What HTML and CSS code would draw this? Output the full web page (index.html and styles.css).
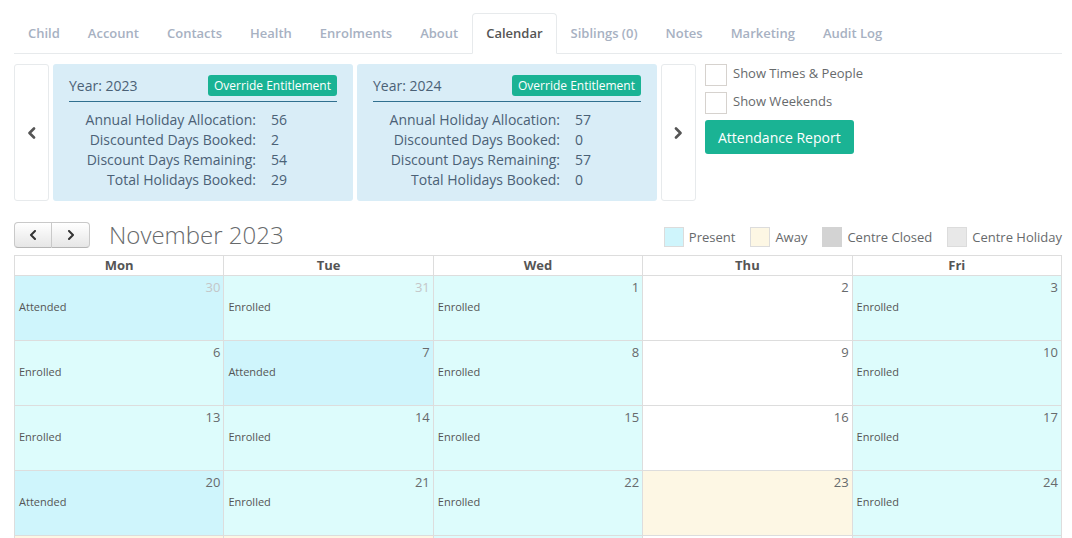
FILE: index.html
```html
<!DOCTYPE html>
<html lang="en">
<head>
<meta charset="utf-8">
<title>Calendar</title>
<link rel="stylesheet" href="styles.css">
</head>
<body>
<div class="page">
  <ul class="tabs">
    <li class="tab">Child</li>
    <li class="tab">Account</li>
    <li class="tab">Contacts</li>
    <li class="tab">Health</li>
    <li class="tab">Enrolments</li>
    <li class="tab">About</li>
    <li class="tab active">Calendar</li>
    <li class="tab">Siblings (0)</li>
    <li class="tab">Notes</li>
    <li class="tab">Marketing</li>
    <li class="tab">Audit Log</li>
  </ul>

  <div class="year-row">
    <button class="arrow-box" type="button" aria-label="Previous year">
      <svg width="9" height="12" viewBox="0 0 9 12"><polyline points="7,1.5 2.5,6 7,10.5" fill="none" stroke="#555" stroke-width="2.6" stroke-linecap="round" stroke-linejoin="round"/></svg>
    </button>

    <div class="year-card">
      <div class="year-head">
        <span>Year: 2023</span>
        <span class="btn-override">Override Entitlement</span>
      </div>
      <dl class="stats">
        <dt>Annual Holiday Allocation:</dt><dd>56</dd>
        <dt>Discounted Days Booked:</dt><dd>2</dd>
        <dt>Discount Days Remaining:</dt><dd>54</dd>
        <dt>Total Holidays Booked:</dt><dd>29</dd>
      </dl>
    </div>

    <div class="year-card">
      <div class="year-head">
        <span>Year: 2024</span>
        <span class="btn-override">Override Entitlement</span>
      </div>
      <dl class="stats">
        <dt>Annual Holiday Allocation:</dt><dd>57</dd>
        <dt>Discounted Days Booked:</dt><dd>0</dd>
        <dt>Discount Days Remaining:</dt><dd>57</dd>
        <dt>Total Holidays Booked:</dt><dd>0</dd>
      </dl>
    </div>

    <button class="arrow-box" type="button" aria-label="Next year">
      <svg width="9" height="12" viewBox="0 0 9 12"><polyline points="2,1.5 6.5,6 2,10.5" fill="none" stroke="#555" stroke-width="2.6" stroke-linecap="round" stroke-linejoin="round"/></svg>
    </button>

    <div class="controls">
      <label class="check"><span class="box"></span><span class="check-text">Show Times &amp; People</span></label>
      <label class="check"><span class="box"></span><span class="check-text">Show Weekends</span></label>
      <button class="btn-report" type="button">Attendance Report</button>
    </div>
  </div>

  <div class="cal-toolbar">
    <div class="nav-group">
      <button class="nav-btn first" type="button" aria-label="Previous month">
        <svg width="8" height="10" viewBox="0 0 8 10"><polyline points="6,1 2,5 6,9" fill="none" stroke="#333" stroke-width="2" stroke-linecap="round" stroke-linejoin="round"/></svg>
      </button>
      <button class="nav-btn last" type="button" aria-label="Next month">
        <svg width="8" height="10" viewBox="0 0 8 10"><polyline points="2,1 6,5 2,9" fill="none" stroke="#333" stroke-width="2" stroke-linecap="round" stroke-linejoin="round"/></svg>
      </button>
    </div>
    <h2 class="cal-title">November 2023</h2>
    <div class="legend">
      <div class="legend-item"><span class="swatch present"></span>Present</div>
      <div class="legend-item"><span class="swatch away"></span>Away</div>
      <div class="legend-item"><span class="swatch closed"></span>Centre Closed</div>
      <div class="legend-item"><span class="swatch holiday"></span>Centre Holiday</div>
    </div>
  </div>

  <div class="cal">
    <div class="cal-row cal-head">
      <div>Mon</div><div>Tue</div><div>Wed</div><div>Thu</div><div>Fri</div>
    </div>
    <div class="cal-row">
      <div class="day attended"><div class="num other">30</div><div class="status">Attended</div></div>
      <div class="day enrolled"><div class="num other">31</div><div class="status">Enrolled</div></div>
      <div class="day enrolled"><div class="num">1</div><div class="status">Enrolled</div></div>
      <div class="day"><div class="num">2</div></div>
      <div class="day enrolled"><div class="num">3</div><div class="status">Enrolled</div></div>
    </div>
    <div class="cal-row">
      <div class="day enrolled"><div class="num">6</div><div class="status">Enrolled</div></div>
      <div class="day attended"><div class="num">7</div><div class="status">Attended</div></div>
      <div class="day enrolled"><div class="num">8</div><div class="status">Enrolled</div></div>
      <div class="day"><div class="num">9</div></div>
      <div class="day enrolled"><div class="num">10</div><div class="status">Enrolled</div></div>
    </div>
    <div class="cal-row">
      <div class="day enrolled"><div class="num">13</div><div class="status">Enrolled</div></div>
      <div class="day enrolled"><div class="num">14</div><div class="status">Enrolled</div></div>
      <div class="day enrolled"><div class="num">15</div><div class="status">Enrolled</div></div>
      <div class="day"><div class="num">16</div></div>
      <div class="day enrolled"><div class="num">17</div><div class="status">Enrolled</div></div>
    </div>
    <div class="cal-row">
      <div class="day attended"><div class="num">20</div><div class="status">Attended</div></div>
      <div class="day enrolled"><div class="num">21</div><div class="status">Enrolled</div></div>
      <div class="day enrolled"><div class="num">22</div><div class="status">Enrolled</div></div>
      <div class="day away"><div class="num">23</div></div>
      <div class="day enrolled"><div class="num">24</div><div class="status">Enrolled</div></div>
    </div>
    <div class="cal-row">
      <div class="day away"><div class="num">27</div></div>
      <div class="day away"><div class="num">28</div></div>
      <div class="day enrolled"><div class="num">29</div><div class="status">Enrolled</div></div>
      <div class="day"><div class="num">30</div></div>
      <div class="day enrolled"><div class="num other">1</div><div class="status">Enrolled</div></div>
    </div>
  </div>
</div>
</body>
</html>
```

FILE: styles.css
```css
html, body {
  margin: 0;
  overflow: hidden;
}

body {
  font-family: "Open Sans", "DejaVu Sans", sans-serif;
  font-size: 13px;
  color: #676a6c;
  background: #fff;
}

.page {
  padding: 13px 10px 0 14px;
}

/* Tabs */
.tabs {
  display: flex;
  list-style: none;
  margin: 0;
  padding: 0;
  border-bottom: 1px solid #e7eaec;
}

.tab {
  padding: 0 13px;
  line-height: 39px;
  border: 1px solid transparent;
  border-radius: 4px 4px 0 0;
  margin-bottom: -1px;
  font-weight: 600;
  color: #a7b1c2;
  white-space: nowrap;
}

.tab.active {
  color: #555;
  background: #fff;
  border-color: #e7eaec;
  border-bottom-color: #fff;
}

/* Year panels */
.year-row {
  display: flex;
  gap: 4px;
  margin-top: 10px;
  height: 137px;
}

.arrow-box {
  width: 35px;
  flex: none;
  padding: 0;
  border: 1px solid #e7eaec;
  border-radius: 3px;
  background: #fff;
  display: flex;
  align-items: center;
  justify-content: center;
}

.year-card {
  width: 300px;
  flex: none;
  box-sizing: border-box;
  background: #d9edf7;
  border-radius: 3px;
  padding: 11px 16px;
  color: #4b6176;
}

.year-head {
  display: flex;
  justify-content: space-between;
  align-items: center;
  padding-bottom: 5px;
  border-bottom: 1px solid #31708f;
  font-size: 14px;
  line-height: 21px;
}

.btn-override {
  background: #1ab394;
  color: #fff;
  font-size: 12px;
  line-height: 21px;
  padding: 0 6px;
  border-radius: 3px;
}

.stats {
  display: grid;
  grid-template-columns: 187px auto;
  column-gap: 15px;
  margin: 8px 0 0;
  font-size: 14px;
  line-height: 20px;
}

.stats dt {
  text-align: right;
  white-space: nowrap;
}

.stats dd {
  margin: 0;
}

/* Controls */
.controls {
  margin-left: 5px;
  display: flex;
  flex-direction: column;
  align-items: flex-start;
}

.check {
  display: flex;
  align-items: flex-start;
  gap: 6px;
  height: 22px;
  margin-bottom: 6px;
  font-size: 13px;
  color: #676a6c;
}

.check-text {
  line-height: 19px;
}

.box {
  width: 20px;
  height: 20px;
  border: 1px solid #d6d2ce;
  background: #fff;
}

.btn-report {
  background: #1ab394;
  color: #fff;
  border: none;
  border-radius: 3px;
  font-family: "Open Sans", "DejaVu Sans", sans-serif;
  font-size: 14px;
  height: 34px;
  padding: 0 13px;
}

/* Calendar toolbar */
.cal-toolbar {
  display: flex;
  align-items: center;
  height: 26px;
  margin-top: 21px;
  margin-bottom: 7px;
}

.nav-group {
  display: flex;
}

.nav-btn {
  width: 38px;
  height: 26px;
  padding: 0;
  border: 1px solid #c9c9c9;
  border-bottom-color: #b5b5b5;
  background: linear-gradient(#ffffff, #e6e6e6);
  display: flex;
  align-items: center;
  justify-content: center;
}

.nav-btn.first {
  border-radius: 4px 0 0 4px;
}

.nav-btn.last {
  border-left: none;
  border-radius: 0 4px 4px 0;
}

.cal-title {
  margin: 0 0 0 19px;
  font-size: 24px;
  font-weight: 300;
  line-height: 26px;
  color: #676a6c;
}

.legend {
  margin-left: auto;
  display: flex;
  align-items: center;
  padding-top: 4px;
}

.legend-item {
  display: flex;
  align-items: center;
  gap: 5px;
  margin-left: 15px;
  font-size: 13px;
}

.swatch {
  width: 18px;
  height: 18px;
  border: 1px solid #dcdcdc;
}

.swatch.present { background: #cff5fc; }
.swatch.away { background: #fdf7e4; }
.swatch.closed { background: #d3d3d3; border-color: #d3d3d3; }
.swatch.holiday { background: #e8e8e8; }

/* Calendar grid */
.cal {
  border-top: 1px solid #ddd;
  border-left: 1px solid #ddd;
}

.cal-row {
  display: grid;
  grid-template-columns: repeat(5, 1fr);
}

.cal-head > div {
  height: 20px;
  box-sizing: border-box;
  border-right: 1px solid #ddd;
  border-bottom: 1px solid #ddd;
  text-align: center;
  font-weight: 700;
  line-height: 19px;
  color: #555;
}

.day {
  height: 65px;
  box-sizing: border-box;
  border-right: 1px solid #ddd;
  border-bottom: 1px solid #ddd;
  padding: 1px 3px 0 4px;
  background: #fff;
}

.day.attended { background: #cff5fc; }
.day.enrolled { background: #ddfcfc; }
.day.away { background: #fdf7e4; }

.num {
  text-align: right;
  font-size: 13px;
  line-height: 20px;
  color: #676a6c;
}

.num.other {
  color: #c4c6c8;
}

.status {
  font-size: 11px;
  line-height: 20px;
  color: #555;
}
```
